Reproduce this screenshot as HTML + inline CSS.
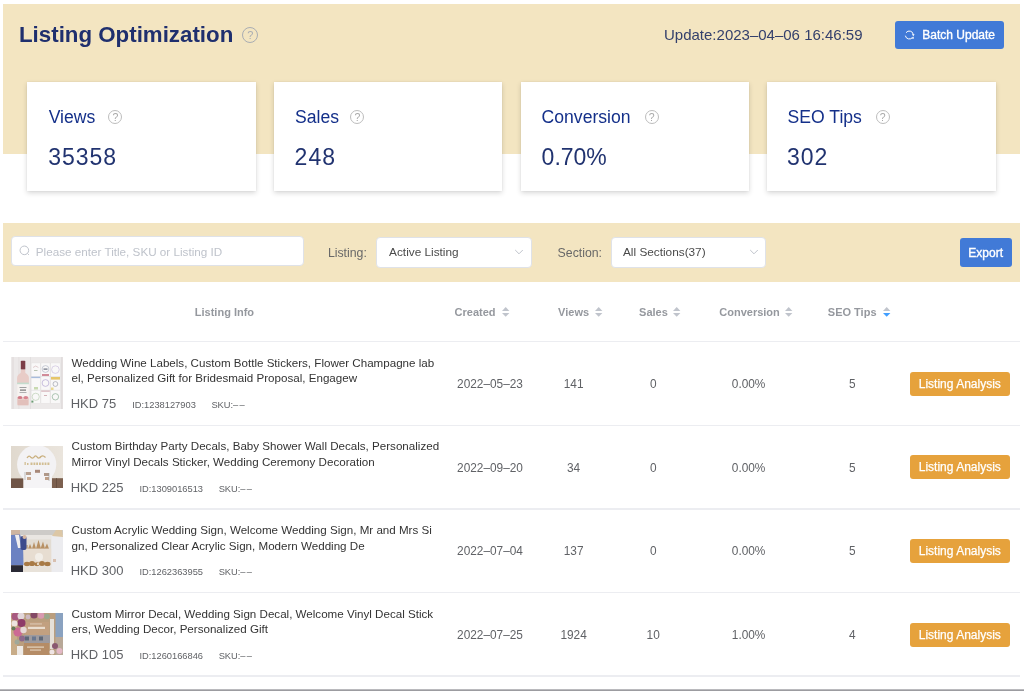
<!DOCTYPE html>
<html><head><meta charset="utf-8">
<style>
*{margin:0;padding:0;box-sizing:border-box}
html,body{width:1024px;height:691px;overflow:hidden;background:#fff;font-family:"Liberation Sans",sans-serif}
.a{position:absolute}
.t{position:absolute;line-height:1;white-space:nowrap}
.hdr{left:3px;top:3.5px;width:1016.7px;height:150.2px;background:#F3E5C1}
.card{top:82px;width:228.6px;height:109px;background:#fff;box-shadow:0 2px 5px rgba(0,0,0,0.16),0 0 2px rgba(0,0,0,0.05)}
.lbl{font-size:17.6px;color:#14308A}
.val{font-size:23px;color:#213370;letter-spacing:1px}
.q{position:absolute;border-radius:50%;border:1px solid #BDBDBD}
.q span{position:absolute;left:0;right:0;text-align:center;color:#A8A8A8;font-family:"Liberation Sans",sans-serif;line-height:1}
.bar{left:2.7px;top:222.6px;width:1017.3px;height:59.1px;background:#F3E5C1}
.inp{background:#fff;border:1px solid #DFE2E8;border-radius:4px}
.flab{font-size:12.3px;color:#686868}
.sel{font-size:11.8px;color:#4A4A4A}
.btnb{background:#417AD7;border-radius:3px}
.th{font-size:11px;font-weight:bold;color:#95989E}
.line{left:3px;width:1016.6px;height:1.5px;background:#ECEDF1}
.ti{font-size:11.6px;color:#333}
.pr{font-size:13px;color:#606266}
.idt{font-size:9.3px;color:#606266}
.cell{font-size:11.85px;color:#606266;width:120px;text-align:center}
.la{left:910px;width:99.6px;height:23.9px;background:#E6A23C;border-radius:3px}
.la span{position:absolute;left:0;right:0;text-align:center;color:#fff;font-size:12px;line-height:1;-webkit-text-stroke:0.25px #fff}
#w{position:absolute;left:0;top:0;width:1024px;height:691px;overflow:hidden;background:#fff;filter:blur(0.35px)}
</style></head><body><div id="w">

<!-- header -->
<div class="a hdr"></div>
<div class="t" style="left:19px;top:24.2px;font-size:22.3px;font-weight:bold;color:#1F2F6E">Listing Optimization</div>
<div class="q" style="left:242.3px;top:26.9px;width:16px;height:16px;border-color:#A9ADB3"><span style="top:2px;font-size:11px;color:#A9ADB3">?</span></div>
<div class="t" style="left:664px;top:26.9px;font-size:15px;color:#34406C">Update:2023–04–06 16:46:59</div>
<div class="a btnb" style="left:895px;top:20.6px;width:109px;height:28.6px"></div>
<svg class="a" style="left:903px;top:28.5px" width="13" height="13" viewBox="0 0 13 13">
 <path d="M3.02 3.71 A4 4 0 0 1 10.28 5.65" fill="none" stroke="#fff" stroke-width="1"/>
 <path d="M2.36 6.69 A4 4 0 0 0 9.58 8.29" fill="none" stroke="#fff" stroke-width="1"/>
 <path d="M8.9 5.2 L11.6 5.2 L10.3 7.2Z" fill="#fff"/>
 <path d="M8.4 9.4 L10.6 7.4 L10.8 9.8Z" fill="#fff"/>
</svg>
<div class="t" style="left:922.3px;top:28.8px;font-size:12px;color:#fff;-webkit-text-stroke:0.35px #fff">Batch Update</div>

<!-- cards -->
<div class="a card" style="left:27.3px"></div>
<div class="a card" style="left:273.9px"></div>
<div class="a card" style="left:520.5px"></div>
<div class="a card" style="left:767.1px"></div>

<div class="t lbl" style="left:48.7px;top:109.3px">Views</div>
<div class="q" style="left:108.4px;top:109.9px;width:14px;height:14px"><span style="top:1.6px;font-size:10.5px">?</span></div>
<div class="t val" style="left:48.2px;top:146.1px">35358</div>

<div class="t lbl" style="left:295px;top:109.3px">Sales</div>
<div class="q" style="left:350.4px;top:109.9px;width:14px;height:14px"><span style="top:1.6px;font-size:10.5px">?</span></div>
<div class="t val" style="left:294.6px;top:146.1px">248</div>

<div class="t lbl" style="left:541.6px;top:109.3px">Conversion</div>
<div class="q" style="left:644.6px;top:109.9px;width:14px;height:14px"><span style="top:1.6px;font-size:10.5px">?</span></div>
<div class="t val" style="left:541.6px;top:146.1px;letter-spacing:0">0.70%</div>

<div class="t lbl" style="left:787.6px;top:109.3px">SEO Tips</div>
<div class="q" style="left:875.6px;top:109.9px;width:14px;height:14px"><span style="top:1.6px;font-size:10.5px">?</span></div>
<div class="t val" style="left:787px;top:146.1px">302</div>

<!-- filter bar -->
<div class="a bar"></div>
<div class="a inp" style="left:11.2px;top:235.5px;width:292.4px;height:30.9px"></div>
<svg class="a" style="left:18px;top:244px" width="14" height="14" viewBox="0 0 14 14">
 <circle cx="6.35" cy="6.35" r="4.3" fill="none" stroke="#C0C4CC" stroke-width="1"/>
 <path d="M9.4 9.4 L10.9 10.9" stroke="#C0C4CC" stroke-width="1"/>
</svg>
<div class="t" style="left:35.8px;top:246px;font-size:11.7px;color:#BFC3CB">Please enter Title, SKU or Listing ID</div>

<div class="t flab" style="left:327.9px;top:247.1px">Listing:</div>
<div class="a inp" style="left:376.2px;top:236.8px;width:156.1px;height:30.8px"></div>
<div class="t sel" style="left:389.1px;top:247.3px">Active Listing</div>
<svg class="a" style="left:514px;top:248px" width="10" height="8" viewBox="0 0 10 8"><path d="M1.2 2 L5 5.8 L8.8 2" fill="none" stroke="#C0C4CC" stroke-width="1"/></svg>

<div class="t flab" style="left:557.6px;top:247.1px">Section:</div>
<div class="a inp" style="left:610.9px;top:236.8px;width:155.6px;height:30.8px"></div>
<div class="t sel" style="left:623px;top:247.3px">All Sections(37)</div>
<svg class="a" style="left:749px;top:248px" width="10" height="8" viewBox="0 0 10 8"><path d="M1.2 2 L5 5.8 L8.8 2" fill="none" stroke="#C0C4CC" stroke-width="1"/></svg>

<div class="a btnb" style="left:959.5px;top:238px;width:52.1px;height:28.6px"></div>
<div class="t" style="left:968.3px;top:246.8px;font-size:12px;color:#fff;-webkit-text-stroke:0.35px #fff">Export</div>

<!-- table header -->
<div class="t th" style="left:194.8px;top:307.2px">Listing Info</div>
<div class="t th" style="left:454.6px;top:307.2px">Created</div>
<div class="t th" style="left:558.1px;top:307.2px">Views</div>
<div class="t th" style="left:639.1px;top:307.2px">Sales</div>
<div class="t th" style="left:719.3px;top:307.2px">Conversion</div>
<div class="t th" style="left:827.8px;top:307.2px">SEO Tips</div>
<svg class="a" style="left:502.4px;top:307px" width="8" height="10" viewBox="0 0 8 10"><path d="M0 3.9 L3.7 0 L7.4 3.9Z" fill="#C0C4CC"/><path d="M0 6 L3.7 9.8 L7.4 6Z" fill="#C0C4CC"/></svg>
<svg class="a" style="left:595px;top:307px" width="8" height="10" viewBox="0 0 8 10"><path d="M0 3.9 L3.7 0 L7.4 3.9Z" fill="#C0C4CC"/><path d="M0 6 L3.7 9.8 L7.4 6Z" fill="#C0C4CC"/></svg>
<svg class="a" style="left:673.3px;top:307px" width="8" height="10" viewBox="0 0 8 10"><path d="M0 3.9 L3.7 0 L7.4 3.9Z" fill="#C0C4CC"/><path d="M0 6 L3.7 9.8 L7.4 6Z" fill="#C0C4CC"/></svg>
<svg class="a" style="left:784.9px;top:307px" width="8" height="10" viewBox="0 0 8 10"><path d="M0 3.9 L3.7 0 L7.4 3.9Z" fill="#C0C4CC"/><path d="M0 6 L3.7 9.8 L7.4 6Z" fill="#C0C4CC"/></svg>
<svg class="a" style="left:883px;top:307px" width="8" height="10" viewBox="0 0 8 10"><path d="M0 3.9 L3.7 0 L7.4 3.9Z" fill="#C0C4CC"/><path d="M0 6 L3.7 9.8 L7.4 6Z" fill="#409EFF"/></svg>

<!-- row lines -->
<div class="a line" style="top:340.75px"></div>
<div class="a line" style="top:424.5px"></div>
<div class="a line" style="top:508.15px"></div>
<div class="a line" style="top:591.75px"></div>
<div class="a line" style="top:675.3px"></div>

<div class="t ti" style="left:71.6px;top:356.58px">Wedding Wine Labels, Custom Bottle Stickers, Flower Champagne lab</div>
<div class="t ti" style="left:71.6px;top:372.38px">el, Personalized Gift for Bridesmaid Proposal, Engagew</div>
<div class="t pr" style="left:70.7px;top:397px">HKD 75<span class="idt" style="margin-left:16px">ID:1238127903</span><span class="idt" style="margin-left:15.6px">SKU:<span style="letter-spacing:1.2px">––</span></span></div>
<div class="t cell" style="left:430px;top:378.87px">2022–05–23</div>
<div class="t cell" style="left:513.6px;top:378.87px">141</div>
<div class="t cell" style="left:593.2px;top:378.87px">0</div>
<div class="t cell" style="left:688.6px;top:378.87px">0.00%</div>
<div class="t cell" style="left:792.3px;top:378.87px">5</div>
<div class="a la" style="top:371.7px"><span style="top:6.1px">Listing Analysis</span></div>
<div class="t ti" style="left:71.6px;top:440.25px">Custom Birthday Party Decals, Baby Shower Wall Decals, Personalized</div>
<div class="t ti" style="left:71.6px;top:456.05px">Mirror Vinyl Decals Sticker, Wedding Ceremony Decoration</div>
<div class="t pr" style="left:70.7px;top:480.67px">HKD 225<span class="idt" style="margin-left:16px">ID:1309016513</span><span class="idt" style="margin-left:15.6px">SKU:<span style="letter-spacing:1.2px">––</span></span></div>
<div class="t cell" style="left:430px;top:462.54px">2022–09–20</div>
<div class="t cell" style="left:513.6px;top:462.54px">34</div>
<div class="t cell" style="left:593.2px;top:462.54px">0</div>
<div class="t cell" style="left:688.6px;top:462.54px">0.00%</div>
<div class="t cell" style="left:792.3px;top:462.54px">5</div>
<div class="a la" style="top:455.37px"><span style="top:6.1px">Listing Analysis</span></div>
<div class="t ti" style="left:71.6px;top:523.92px">Custom Acrylic Wedding Sign, Welcome Wedding Sign, Mr and Mrs Si</div>
<div class="t ti" style="left:71.6px;top:539.72px">gn, Personalized Clear Acrylic Sign, Modern Wedding De</div>
<div class="t pr" style="left:70.7px;top:564.34px">HKD 300<span class="idt" style="margin-left:16px">ID:1262363955</span><span class="idt" style="margin-left:15.6px">SKU:<span style="letter-spacing:1.2px">––</span></span></div>
<div class="t cell" style="left:430px;top:546.21px">2022–07–04</div>
<div class="t cell" style="left:513.6px;top:546.21px">137</div>
<div class="t cell" style="left:593.2px;top:546.21px">0</div>
<div class="t cell" style="left:688.6px;top:546.21px">0.00%</div>
<div class="t cell" style="left:792.3px;top:546.21px">5</div>
<div class="a la" style="top:539.04px"><span style="top:6.1px">Listing Analysis</span></div>
<div class="t ti" style="left:71.6px;top:607.59px">Custom Mirror Decal, Wedding Sign Decal, Welcome Vinyl Decal Stick</div>
<div class="t ti" style="left:71.6px;top:623.39px">ers, Wedding Decor, Personalized Gift</div>
<div class="t pr" style="left:70.7px;top:648.01px">HKD 105<span class="idt" style="margin-left:16px">ID:1260166846</span><span class="idt" style="margin-left:15.6px">SKU:<span style="letter-spacing:1.2px">––</span></span></div>
<div class="t cell" style="left:430px;top:629.88px">2022–07–25</div>
<div class="t cell" style="left:513.6px;top:629.88px">1924</div>
<div class="t cell" style="left:593.2px;top:629.88px">10</div>
<div class="t cell" style="left:688.6px;top:629.88px">1.00%</div>
<div class="t cell" style="left:792.3px;top:629.88px">4</div>
<div class="a la" style="top:622.71px"><span style="top:6.1px">Listing Analysis</span></div>
<svg class="a" style="left:10.9px;top:357.4px" width="52" height="52" viewBox="0 0 52 52">
<defs><filter id="b1" x="-5%" y="-5%" width="110%" height="110%"><feGaussianBlur stdDeviation="0.55"/></filter></defs>
<g filter="url(#b1)">
<rect width="52" height="52" fill="#ECE9E9"/>
<rect x="1.5" y="0" width="1" height="52" fill="#DDD8D8"/><rect x="7.5" y="0" width="0.8" height="52" fill="#E2DEDE"/>
<rect x="50.3" y="0" width="1.2" height="52" fill="#DDD8D8"/><rect x="19" y="0" width="0.8" height="52" fill="#E0DCDC"/>
<rect x="9.8" y="3.7" width="4.5" height="9" rx="0.8" fill="#7C3C47"/>
<path d="M9.9 12.6 L14.2 12.6 L14.4 16 Q17.9 18 17.9 21 L17.9 47.2 Q17.9 48.6 16.5 48.6 L7.5 48.6 Q6.1 48.6 6.1 47.2 L6.1 21 Q6.1 18 9.6 16Z" fill="#E8CCC7"/>
<rect x="6.1" y="26.5" width="11.8" height="14" fill="#F6F3F1"/>
<rect x="8.5" y="30" width="7" height="1" fill="#A0A0A0"/><rect x="9" y="32.5" width="6" height="1.2" fill="#777"/><rect x="8.5" y="35" width="7" height="0.9" fill="#A8A8A8"/>
<rect x="6.1" y="25.6" width="11.8" height="1.6" fill="#C4DCCD"/>
<ellipse cx="9" cy="40.5" rx="2.4" ry="1.6" fill="#D07A86"/><ellipse cx="14.8" cy="40.6" rx="2.4" ry="1.6" fill="#D8848F"/>
<rect x="7" y="43" width="10" height="5" fill="#E2C0BB"/>
<g fill="#F9F8F8" stroke="#DCDADA" stroke-width="0.3">
<rect x="20.2" y="6" width="9" height="13.3"/><rect x="30" y="6" width="9" height="13.3"/><rect x="39.8" y="6" width="9.3" height="13.3"/>
<rect x="20.2" y="19.7" width="9" height="13.3"/><rect x="30" y="19.7" width="9" height="13.3"/><rect x="39.8" y="19.7" width="9.3" height="13.3"/>
<rect x="20.2" y="33.4" width="9" height="12.9"/><rect x="30" y="33.4" width="9" height="12.9"/><rect x="39.8" y="33.4" width="9.3" height="12.9"/>
</g>
<g fill="none" stroke-width="0.6">
<path d="M22 10.5 Q24.7 7.5 27.4 10.5" stroke="#D0B0B4"/>
<rect x="23" y="13" width="3.5" height="0.8" fill="#A9B6A0" stroke="none"/>
<circle cx="34.5" cy="12" r="3.4" stroke="#A8AFC0"/><rect x="32.5" y="11.5" width="4" height="1.2" fill="#6A7080" stroke="none"/><rect x="31" y="17.2" width="7" height="1.6" fill="#C87080" stroke="none"/>
<circle cx="44.4" cy="12.6" r="3.8" stroke="#C6B8DA"/>
<rect x="20.2" y="19.7" width="9" height="1.4" fill="#A8BCDC" stroke="none"/><rect x="23" y="30" width="4" height="2.5" fill="#C8DAB0" stroke="none"/>
<circle cx="34.5" cy="26" r="3.4" stroke="#A898CC"/>
<rect x="40" y="20" width="9" height="2.6" fill="#E6C66A" stroke="none"/><circle cx="44.4" cy="27" r="2.4" stroke="#8E93A0"/><rect x="40" y="30.5" width="2.5" height="2.5" fill="#EAD890" stroke="none"/>
<circle cx="24.7" cy="39.8" r="3.6" stroke="#B2C8A8"/><rect x="20.4" y="43.6" width="2" height="2" fill="#6A9A72" stroke="none"/>
<rect x="30.2" y="33.6" width="8.6" height="1" fill="#D0A8B0" stroke="none"/><rect x="33" y="38" width="3" height="0.8" fill="#C8A0A8" stroke="none"/>
<circle cx="44.4" cy="39.8" r="3.2" stroke="#98B8A0" stroke-width="0.8"/>
</g>
</g></svg>
<svg class="a" style="left:10.9px;top:446.1px" width="52" height="42" viewBox="0 0 52 42">
<defs><filter id="b2" x="-5%" y="-5%" width="110%" height="110%"><feGaussianBlur stdDeviation="0.6"/></filter></defs>
<g filter="url(#b2)">
<rect width="52" height="42" fill="#E6E0D7"/>
<rect x="0" y="0" width="52" height="42" fill="url(#g2)"/>
<circle cx="25.7" cy="18.6" r="19.6" fill="#F3F2F4"/>
<path d="M16 12 Q18 8.5 20 11.5 Q22 13 23.5 10.5 Q25 9 26.5 11.5 Q28 13 30 10.5 Q32 9 34.5 11.5" fill="none" stroke="#C9AF7E" stroke-width="1.3"/>
<g fill="#D2BE93"><rect x="13.5" y="16" width="1.3" height="3"/><rect x="16" y="17" width="1.5" height="2"/><rect x="19.5" y="16.5" width="2" height="2.5"/><rect x="22.5" y="16.5" width="1.8" height="2.5"/><rect x="25.2" y="16.5" width="1.8" height="2.5"/><rect x="28" y="16.5" width="1.8" height="2.5"/><rect x="30.8" y="16.5" width="1.8" height="2.5"/><rect x="33.6" y="16.5" width="1.8" height="2.5"/><rect x="36.4" y="16.5" width="2" height="2.5"/></g>
<rect x="0" y="32.4" width="12.5" height="9.6" fill="#6F5546"/>
<rect x="40.8" y="32.2" width="11.2" height="9.8" fill="#7C604F"/><rect x="45" y="32" width="0.6" height="10" fill="#5E4638"/>
<rect x="12.5" y="29" width="28.3" height="13" fill="#F5F4F6"/>
<rect x="15" y="26" width="5" height="3" fill="#B8A090"/><rect x="24" y="23.8" width="5" height="3" fill="#A88878"/><rect x="33" y="27" width="5" height="3" fill="#B09888"/>
<rect x="16" y="31" width="4" height="3" fill="#C8A890"/><rect x="34" y="31" width="4" height="3" fill="#C0A088"/>
<path d="M14 26 L14 34" stroke="#9A9A9A" stroke-width="0.6"/><path d="M38 27 L38 35" stroke="#9A9A9A" stroke-width="0.6"/>
</g>
<defs><linearGradient id="g2" x1="0" x2="1"><stop offset="0" stop-color="#DCD4C8" stop-opacity="0.6"/><stop offset="1" stop-color="#EEE9E2" stop-opacity="0.5"/></linearGradient></defs>
</svg>
<svg class="a" style="left:10.9px;top:530px" width="52" height="42" viewBox="0 0 52 42">
<defs><filter id="b3" x="-5%" y="-5%" width="110%" height="110%"><feGaussianBlur stdDeviation="0.6"/></filter></defs>
<g filter="url(#b3)">
<rect width="52" height="42" fill="#E9E6E2"/>
<rect x="0" y="0" width="52" height="5" fill="#CDCBC8"/>
<rect x="12" y="9.4" width="28" height="9.4" fill="#E2DCD3"/>
<g fill="#B89064"><path d="M17 18.8 L19 14 L21 18.8Z"/><path d="M21 18.8 L23 12 L25 18.8Z"/><path d="M25 18.8 L27.5 10 L30 18.8Z"/><path d="M29.5 18.8 L32 11.5 L34 18.8Z"/><path d="M33.5 18.8 L36 13.5 L38 18.8Z"/></g><rect x="14" y="15" width="3" height="3.8" fill="#C9B090"/>
<rect x="12" y="18.8" width="28.5" height="16.4" fill="#E7DDD1"/>
<ellipse cx="28" cy="27" rx="4" ry="4" fill="#F2EEE8"/>
<g fill="#A87A45"><ellipse cx="16" cy="34" rx="3" ry="2.2"/><ellipse cx="21" cy="33.5" rx="3" ry="2.6"/><ellipse cx="26" cy="34.2" rx="2.6" ry="2"/><ellipse cx="31" cy="33.6" rx="3" ry="2.5"/><ellipse cx="36.5" cy="34" rx="3" ry="2.2"/></g><circle cx="27" cy="34" r="1.2" fill="#E8DCC8"/>
<rect x="12" y="36.7" width="29" height="5.3" fill="#E8E2D9"/>
<rect x="0" y="0" width="9" height="5" fill="#CDB4A0"/>
<path d="M0 5 L9 4.5 L12 12 L12.5 35 L0 35Z" fill="#6C82C2"/>
<path d="M4 5 L8 5 L10 18 L7 18Z" fill="#F0EEF0"/>
<rect x="9.5" y="6" width="6" height="14" rx="2" fill="#3E4C8C"/>
<rect x="11.5" y="5" width="4" height="4" rx="2" fill="#D7B8A0"/>
<rect x="0" y="35.2" width="12" height="6.8" fill="#2A2A36"/>
<rect x="40.5" y="6" width="11.5" height="36" fill="#ECECEF"/>
<path d="M41 6 L45 0 L51 0 L52 7 Z" fill="#DCC7A6"/>
<rect x="42" y="29" width="3" height="3" fill="#D8C0B0"/>
</g></svg>
<svg class="a" style="left:10.9px;top:613.1px" width="52" height="42" viewBox="0 0 52 42">
<defs><filter id="b4" x="-5%" y="-5%" width="110%" height="110%"><feGaussianBlur stdDeviation="0.6"/></filter></defs>
<g filter="url(#b4)">
<rect width="52" height="42" fill="#BA9E7E"/>
<rect x="0" y="0" width="6" height="42" fill="#C8AC88"/>
<rect x="14" y="9" width="24" height="13" fill="#C2A080"/>
<rect x="17" y="13.8" width="17" height="2.2" fill="#E9DDCF"/>
<rect x="19" y="10.5" width="12" height="0.9" fill="#E0D0BE"/>
<rect x="13" y="22" width="26" height="8" fill="#9D9A9E"/>
<rect x="14" y="23.5" width="4" height="4" fill="#5E6878"/><rect x="21" y="23.5" width="4" height="4" fill="#6A7890"/><rect x="28" y="23.5" width="4" height="4" fill="#5E6878"/>
<rect x="13" y="30" width="25" height="12" fill="#B58C66"/>
<rect x="16" y="33.5" width="17" height="1.2" fill="#E4D4C0"/><rect x="19" y="36.5" width="11" height="1.1" fill="#E4D4C0"/>
<rect x="39" y="6" width="4" height="30" fill="#E6E0D8"/>
<rect x="44.5" y="0" width="7.5" height="24" fill="#8AA2C0"/>
<rect x="44.5" y="24" width="7.5" height="18" fill="#B8A898"/>
<circle cx="4.5" cy="3.5" r="4" fill="#A85A80"/>
<circle cx="10" cy="3" r="3.5" fill="#E2D6DA"/>
<circle cx="10.5" cy="10" r="4" fill="#8E3A68"/>
<circle cx="3.5" cy="10.5" r="3" fill="#EDE4DE"/>
<circle cx="7" cy="19" r="4.6" fill="#CC6A94"/>
<circle cx="12.5" cy="17" r="3.2" fill="#E6D8D6"/>
<circle cx="2.5" cy="15.5" r="2" fill="#667858"/>
<circle cx="11" cy="25.5" r="3" fill="#8C6A8C"/>
<circle cx="6" cy="29" r="2.5" fill="#A0A89A"/>
<circle cx="23" cy="2" r="3.6" fill="#844A66"/><circle cx="30" cy="2.5" r="3.3" fill="#D89AB0"/>
<circle cx="36" cy="3.5" r="2.8" fill="#9AA88C"/><circle cx="17" cy="4" r="2.4" fill="#CDB8C0"/>
<rect x="6" y="33" width="6" height="9" fill="#EEEAE6"/>
<circle cx="44" cy="33" r="3" fill="#8A5870"/><circle cx="48.5" cy="38" r="3" fill="#E4B8C6"/><circle cx="41" cy="39" r="2.5" fill="#EFE4E4"/>
</g></svg>

<div class="a" style="left:0;top:688.6px;width:1024px;height:2.4px;background:linear-gradient(#C9C9CC,#8D8D92)"></div>
</div></body></html>
